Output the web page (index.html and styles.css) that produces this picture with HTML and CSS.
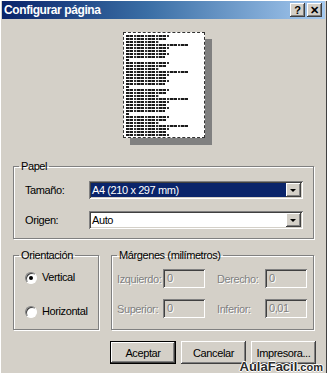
FILE: index.html
```html
<!DOCTYPE html>
<html lang="es">
<head>
    <meta charset="UTF-8">
    <meta name="viewport" content="width=device-width, initial-scale=1.0">
    <title>Configurar página</title>
    <link rel="stylesheet" href="styles.css">
</head>
<body>
    <div class="window">
        <div class="titlebar">
            <span class="title">Configurar página</span>
            <div class="tbuttons">
                <span class="tbtn">?</span>
                <span class="tbtn">&#x2715;</span>
            </div>
        </div>

        <div class="preview">
            <div class="sheet">
                <div class="page">
                    <div class="block">
                        <i class="ln a"></i><i class="ln b"></i><i class="ln c"></i><i class="ln d"></i>
                        <i class="ln a"></i><i class="ln b"></i><i class="ln a"></i><i class="ln e"></i><i class="ln g"></i>
                    </div>
                    <div class="block">
                        <i class="ln a"></i><i class="ln b"></i><i class="ln c"></i><i class="ln d"></i>
                        <i class="ln a"></i><i class="ln b"></i><i class="ln a"></i><i class="ln e"></i><i class="ln g"></i>
                    </div>
                    <div class="block">
                        <i class="ln a"></i><i class="ln b"></i><i class="ln c"></i><i class="ln d"></i>
                        <i class="ln a"></i><i class="ln b"></i><i class="ln a"></i><i class="ln e"></i><i class="ln g"></i>
                    </div>
                    <div class="block">
                        <i class="ln a"></i><i class="ln b"></i><i class="ln c"></i><i class="ln d"></i>
                        <i class="ln a"></i><i class="ln b"></i><i class="ln a"></i><i class="ln e"></i>
                    </div>
                </div>
            </div>
        </div>

        <div class="content">
            <fieldset class="group papel">
                <legend>Papel</legend>
                <div class="row">
                    <span class="lbl">Tamaño:</span>
                    <div class="combo">
                        <span class="combo-text selected">A4 (210 x 297 mm)</span>
                        <span class="drop"><i class="arrow"></i></span>
                    </div>
                </div>
                <div class="row">
                    <span class="lbl">Origen:</span>
                    <div class="combo">
                        <span class="combo-text">Auto</span>
                        <span class="drop"><i class="arrow"></i></span>
                    </div>
                </div>
            </fieldset>

            <div class="lower">
                <fieldset class="group orient">
                    <legend>Orientación</legend>
                    <label class="radio"><span class="dot checked"></span>Vertical</label>
                    <label class="radio"><span class="dot"></span>Horizontal</label>
                </fieldset>
                <fieldset class="group margins">
                    <legend>Márgenes (milímetros)</legend>
                    <div class="mgrid">
                        <span class="dis">Izquierdo:</span>
                        <span class="field">0</span>
                        <span class="dis right">Derecho:</span>
                        <span class="field">0</span>
                        <span class="dis">Superior:</span>
                        <span class="field">0</span>
                        <span class="dis right">Inferior:</span>
                        <span class="field">0,01</span>
                    </div>
                </fieldset>
            </div>

            <div class="actions">
                <button class="btn default">Aceptar</button>
                <button class="btn">Cancelar</button>
                <button class="btn">Impresora...</button>
            </div>
        </div>

        <div class="watermark">AulaFacil<small>.com</small></div>
    </div>
</body>
</html>
```

FILE: styles.css
```css
* {
    margin: 0;
    padding: 0;
    box-sizing: border-box;
}
body, html {
    width: 100%;
    height: 100%;
    overflow: hidden;
}
body {
    font-family: "Liberation Sans", Arial, sans-serif;
    font-size: 11px;
    letter-spacing: -0.4px;
    color: #000;
    background: #d4d0c8;
}
.window {
    position: relative;
    width: 327px;
    height: 373px;
    padding: 1px 2px;
    background: #d4d0c8;
    box-shadow: inset 1px 1px #fff, inset -1px 0 #404040;
    overflow: hidden;
}
.titlebar {
    height: 18px;
    display: flex;
    align-items: center;
    justify-content: space-between;
    padding: 0 3px 0 2px;
    background: linear-gradient(90deg, #0a246a 0%, #3a6ea5 45%, #a6caf0 100%);
}
.title {
    color: #fff;
    font-weight: bold;
    font-size: 12px;
    letter-spacing: -0.4px;
}
.tbuttons {
    display: flex;
    gap: 2px;
}
.tbtn {
    width: 15px;
    height: 14px;
    display: flex;
    align-items: center;
    justify-content: center;
    font-weight: bold;
    font-size: 11px;
    letter-spacing: 0;
    background: #d4d0c8;
    box-shadow: inset -1px -1px #404040, inset 1px 1px #fff, inset -2px -2px #808080;
}

/* vista previa */
.preview {
    height: 141px;
    display: flex;
    justify-content: center;
    padding-top: 13px;
    padding-left: 8px;
}
.sheet {
    width: 89px;
    height: 113px;
}
.page {
    width: 82px;
    height: 106px;
    background: #fff;
    border: 1px dashed #333;
    box-shadow: 7px 7px 0 #808080;
    padding: 2px 2px 0 2px;
    overflow: hidden;
}
.block {
    display: flex;
    flex-direction: column;
}
.ln {
    display: block;
    height: 2px;
    margin-bottom: 1px;
    background: repeating-linear-gradient(90deg, #1a1a1a 0 3px, #777 3px 4px, #1a1a1a 4px 7px, #fff 7px 8px, #333 8px 10px, #bbb 10px 11px);
}
.ln.a { width: 43px; }
.ln.b { width: 41px; }
.ln.c { width: 33px; }
.ln.d { width: 63px; }
.ln.e { width: 39px; }
.ln.g { width: 3px; }

/* contenido */
.content {
    padding: 0 11px;
}
.group {
    border: 1px solid #808080;
    box-shadow: inset 1px 1px #fff, 1px 1px #fff;
}
.group legend {
    margin-left: -6px;
    padding: 0 2px;
    line-height: 13px;
}
.papel {
    padding: 8px 10px 9px 11px;
    display: flex;
    flex-direction: column;
    gap: 12px;
}
.row {
    display: flex;
    align-items: center;
}
.lbl {
    width: 64px;
}
.combo {
    flex: 1;
    height: 18px;
    display: flex;
    padding: 2px;
    background: #fff;
    box-shadow: inset 1px 1px #808080, inset -1px -1px #fff, inset 2px 2px #404040, inset -2px -2px #d4d0c8;
}
.combo-text {
    flex: 1;
    line-height: 14px;
    padding-left: 1px;
}
.combo-text.selected {
    background: #0a246a;
    color: #fff;
}
.drop {
    width: 15px;
    height: 14px;
    display: flex;
    align-items: center;
    justify-content: center;
    background: #d4d0c8;
    box-shadow: inset -1px -1px #404040, inset 1px 1px #fff, inset -2px -2px #808080;
}
.arrow {
    width: 0;
    height: 0;
    border-left: 3px solid transparent;
    border-right: 3px solid transparent;
    border-top: 3px solid #000;
    margin-left: -1px;
}

.lower {
    display: flex;
    gap: 12px;
    margin-top: 10px;
}
.orient {
    width: 86px;
    padding: 9px 0 11px 11px;
    display: flex;
    flex-direction: column;
    gap: 21px;
}
.radio {
    display: flex;
    align-items: center;
    gap: 5px;
    line-height: 13px;
}
.dot {
    width: 12px;
    height: 12px;
    border-radius: 50%;
    background: #fff;
    border: 1px solid;
    border-color: #808080 #fff #fff #808080;
    box-shadow: inset 1px 1px #404040;
    display: flex;
    align-items: center;
    justify-content: center;
}
.dot.checked::after {
    content: "";
    width: 4px;
    height: 4px;
    border-radius: 50%;
    background: #000;
}
.margins {
    flex: 1;
    padding: 7px 5px 11px 5px;
}
.margins legend {
    margin-left: 0;
}
.mgrid {
    display: grid;
    grid-template-columns: 46px 42px 60px 42px;
    row-gap: 11px;
    align-items: center;
}
.dis {
    color: #808080;
    text-shadow: 1px 1px #fff;
}
.dis.right {
    padding-left: 12px;
}
.field {
    height: 19px;
    line-height: 19px;
    padding-left: 4px;
    color: #808080;
    text-shadow: 1px 1px #fff;
    background: #d4d0c8;
    box-shadow: inset 1px 1px #808080, inset -1px -1px #fff, inset 2px 2px #404040, inset -2px -2px #d4d0c8;
}

.actions {
    display: flex;
    justify-content: flex-end;
    gap: 5px;
    margin-top: 11px;
    margin-right: -2px;
}
.btn {
    width: 65px;
    height: 23px;
    border: none;
    font-family: inherit;
    font-size: 11px;
    letter-spacing: -0.4px;
    color: #000;
    background: #d4d0c8;
    box-shadow: inset -1px -1px #404040, inset 1px 1px #fff, inset -2px -2px #808080;
}
.btn.default {
    width: 66px;
    border: 1px solid #000;
}

.watermark {
    position: absolute;
    right: 4px;
    bottom: 0;
    font-family: "Liberation Sans", Arial, sans-serif;
    font-weight: bold;
    font-size: 13px;
    line-height: 12px;
    letter-spacing: 0;
    color: #2a2a2a;
    text-shadow: 1px 0 #fff, -1px 0 #fff, 0 1px #fff, 0 -1px #fff;
}
.watermark small {
    font-size: 11px;
}
```
